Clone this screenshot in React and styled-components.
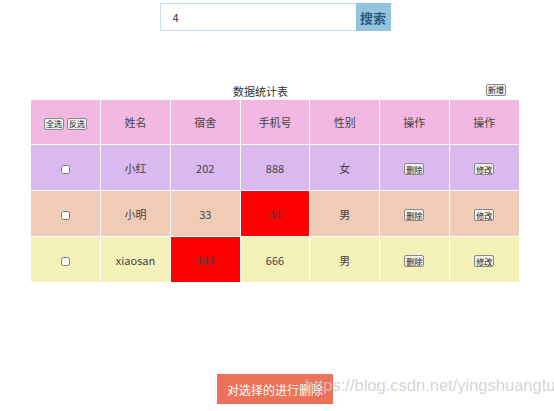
import React, { useState } from "react";
import styled, { createGlobalStyle } from "styled-components";

const FONT = `"Noto Sans CJK SC", "Open Sans", sans-serif`;

const GlobalStyle = createGlobalStyle`
  html, body {
    margin: 0;
    padding: 0;
    background: #fff;
  }
  body {
    font-family: ${FONT};
    color: #444;
  }
`;

const Page = styled.div`
  position: relative;
  width: 554px;
  height: 411px;
  overflow: hidden;
`;

const Wrap = styled.div`
  width: 488px;
  margin-left: 31px;
  padding-top: 3px;
  display: flex;
  flex-direction: column;
  align-items: center;
`;

const SearchBar = styled.div`
  display: flex;
  height: 28px;
`;

const SearchInput = styled.input`
  box-sizing: border-box;
  width: 196px;
  height: 28px;
  border: 1px solid #c9dfec;
  border-right: none;
  padding: 0 12px;
  font-family: ${FONT};
  font-size: 11px;
  color: #333;
  outline: none;
`;

const SearchButton = styled.button`
  width: 35px;
  height: 28px;
  border: none;
  padding: 0;
  background: #93c4de;
  color: #2a5a7c;
  font-family: ${FONT};
  font-size: 13px;
  font-weight: 700;
`;

const TitleRow = styled.div`
  width: 100%;
  margin-top: 53px;
  height: 15px;
  display: grid;
  grid-template-columns: 202px auto 1fr;
  align-items: center;
`;

const Title = styled.div`
  grid-column: 2;
  font-size: 11px;
  line-height: 15px;
  color: #333;
`;

const TinyButton = styled.button`
  box-sizing: border-box;
  height: 12px;
  padding: 0 1px;
  border: 1px solid #8a8a8a;
  border-radius: 2px;
  background: #efefef;
  color: #222;
  font-family: ${FONT};
  font-size: 8px;
  line-height: 9px;
  & + & {
    margin-left: 3px;
  }
`;

const AddButton = styled(TinyButton)`
  justify-self: end;
  margin-right: 13px;
  margin-top: -4px;
`;

const Table = styled.table`
  width: 488px;
  border-collapse: collapse;
  table-layout: fixed;
  font-size: 11px;
  color: #444;
`;

const Row = styled.tr`
  background: ${p => p.bg};
`;

const HeadCell = styled.th`
  height: 44px;
  padding: 0;
  border: 1px solid #fff;
  font-weight: 400;
  font-size: 11px;
  text-align: center;
  &:first-child { border-left: none; }
  &:last-child { border-right: none; }
`;

const Cell = styled.td`
  height: 45px;
  padding: 0;
  border: 1px solid #fff;
  text-align: center;
  background: ${p => (p.warn ? "#ff0000" : "transparent")};
  &:first-child { border-left: none; }
  &:last-child { border-right: none; }
`;

const Check = styled.input`
  width: 9px;
  height: 9px;
  margin: 0;
  vertical-align: middle;
`;

const DeleteSelected = styled.button`
  margin-top: 91px;
  width: 116px;
  height: 30px;
  border: none;
  background: #ee7159;
  color: #fff;
  font-family: ${FONT};
  font-size: 12px;
  padding: 0;
`;

const Watermark = styled.div`
  position: absolute;
  left: 305px;
  top: 376px;
  font-family: "Liberation Sans", Arial, sans-serif;
  font-size: 16.5px;
  color: rgba(205, 205, 205, 0.85);
  pointer-events: none;
  white-space: nowrap;
`;

const ROWS = [
  { name: "小红", room: "202", phone: "888", sex: "女", bg: "#dab8f0" },
  { name: "小明", room: "33", phone: "44", sex: "男", bg: "#f0cbb6", redPhone: true },
  { name: "xiaosan", room: "444", phone: "666", sex: "男", bg: "#f4f2b9", redRoom: true }
];

export default function App() {
  const [query, setQuery] = useState("4");
  return (
    <Page>
      <GlobalStyle />
      <Wrap>
        <SearchBar>
          <SearchInput value={query} onChange={e => setQuery(e.target.value)} />
          <SearchButton>搜索</SearchButton>
        </SearchBar>
        <TitleRow>
          <Title>数据统计表</Title>
          <AddButton>新增</AddButton>
        </TitleRow>
        <Table>
          <thead>
            <Row bg="#f2b8e2">
              <HeadCell>
                <TinyButton>全选</TinyButton>
                <TinyButton>反选</TinyButton>
              </HeadCell>
              <HeadCell>姓名</HeadCell>
              <HeadCell>宿舍</HeadCell>
              <HeadCell>手机号</HeadCell>
              <HeadCell>性别</HeadCell>
              <HeadCell>操作</HeadCell>
              <HeadCell>操作</HeadCell>
            </Row>
          </thead>
          <tbody>
            {ROWS.map(r => (
              <Row key={r.name} bg={r.bg}>
                <Cell><Check type="checkbox" /></Cell>
                <Cell>{r.name}</Cell>
                <Cell warn={r.redRoom}>{r.room}</Cell>
                <Cell warn={r.redPhone}>{r.phone}</Cell>
                <Cell>{r.sex}</Cell>
                <Cell><TinyButton>删除</TinyButton></Cell>
                <Cell><TinyButton>修改</TinyButton></Cell>
              </Row>
            ))}
          </tbody>
        </Table>
        <DeleteSelected>对选择的进行删除</DeleteSelected>
      </Wrap>
      <Watermark>https://blog.csdn.net/yingshuangtu</Watermark>
    </Page>
  );
}
